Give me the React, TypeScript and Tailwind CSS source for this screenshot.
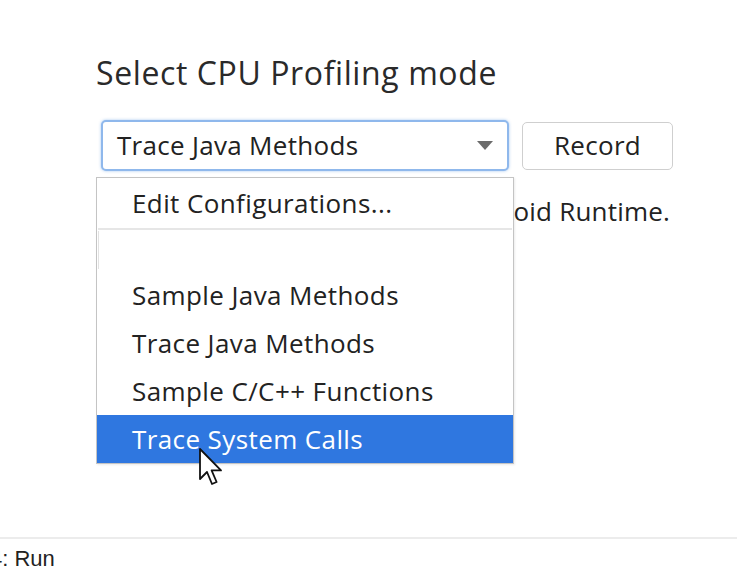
import { Fragment } from "react";

const modes = [
  "Sample Java Methods",
  "Trace Java Methods",
  "Sample C/C++ Functions",
  "Trace System Calls",
];

function Cursor() {
  return (
    <svg
      className="absolute left-[198px] top-[447px]"
      width="26"
      height="40"
      viewBox="0 0 13 20"
    >
      <path
        d="M1 1 L1 16 L4.5 12.5 L7 18.5 L9.3 17.5 L6.8 11.7 L11.5 11.7 Z"
        fill="#fff"
        stroke="#111"
        strokeWidth="0.9"
        strokeLinejoin="round"
      />
    </svg>
  );
}

function ModeMenu() {
  return (
    <div className="absolute left-[96px] top-[177px] w-[418px] border border-[#c4c4c4] bg-white text-[26px] tracking-[0.4px] text-[#222] shadow-[1px_1px_2px_rgba(0,0,0,0.08)]">
      <div className="flex h-[50px] items-center pl-[35px]">Edit Configurations...</div>
      <div className="mx-px h-[2px] bg-[#e6e6e6]" />
      <div className="flex h-[41px]">
        <div className="ml-px mt-px h-[38px] w-px bg-[#e2e2e2]" />
      </div>
      {modes.map((m, i) => (
        <Fragment key={m}>
          <div
            className={
              i === modes.length - 1
                ? "flex h-[48px] items-center bg-[#2f77e0] pl-[35px] text-white"
                : "flex h-[48px] items-center pl-[35px]"
            }
          >
            {m}
          </div>
        </Fragment>
      ))}
    </div>
  );
}

export default function App() {
  return (
    <div className="relative flex h-[566px] w-[737px] flex-col overflow-hidden bg-white font-['Open_Sans',sans-serif] text-[#222]">
      <div className="pl-[96px] pt-[51px]">
        <h1 className="text-[32px] leading-[44px] tracking-[0.6px] text-[#2a2a2a]">Select CPU Profiling mode</h1>

        <div className="mt-[25px] flex items-center gap-[13px] pl-[5px]">
          <div className="flex h-[51px] w-[408px] items-center justify-between rounded-[5px] border-2 border-[#8fb8ec] bg-white pl-[14px] pr-[14px] text-[26px] tracking-[0.3px] shadow-[0_0_3px_rgba(74,144,226,0.5)]">
            <span>Trace Java Methods</span>
            <svg width="16" height="9" viewBox="0 0 16 9">
              <path d="M0 0 L16 0 L8 9 Z" fill="#6b6b6b" />
            </svg>
          </div>
          <button className="flex h-[48px] w-[151px] items-center justify-center rounded-[5px] border border-[#cfcfcf] bg-white text-[26px] tracking-[0.3px] text-[#222]">
            Record
          </button>
        </div>

        <p className="mt-[22px] pl-[5px] text-[26px] leading-[36px] tracking-[0.2px]">
          Instruments Java code using Android Runtime.
        </p>
      </div>

      <div className="mt-auto h-[29px] overflow-hidden border-t-2 border-[#ececec] pt-[9px] font-['Liberation_Sans',sans-serif] text-[22px] leading-none text-[#222]">
        <span className="-ml-[10px]">4: Run</span>
      </div>

      <ModeMenu />
      <Cursor />
    </div>
  );
}
